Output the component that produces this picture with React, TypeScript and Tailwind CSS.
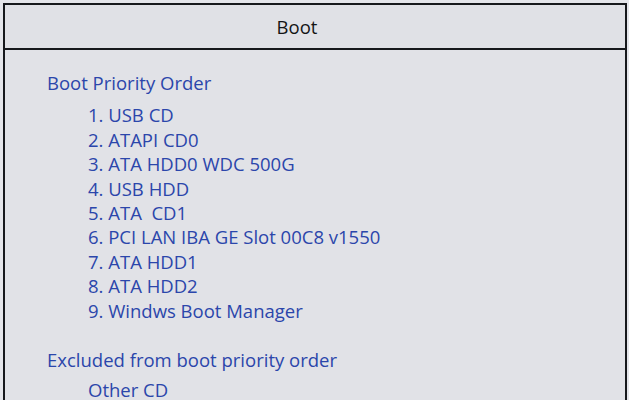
const bootOrder = [
  '1. USB CD',
  '2. ATAPI CD0',
  '3. ATA HDD0 WDC 500G',
  '4. USB HDD',
  '5. ATA\u00a0 CD1',
  '6. PCI LAN IBA GE Slot 00C8 v1550',
  '7. ATA HDD1',
  '8. ATA HDD2',
  '9. Windws Boot Manager',
];

export default function App() {
  return (
    <div
      className="h-[400px] w-[629px] overflow-hidden bg-[#e4e5ea] pl-[3px] pr-[2px] pt-[3px]"
      style={{ fontFamily: '"Open Sans", "Noto Sans", sans-serif' }}
    >
      <div className="h-[420px] border-2 border-[#16181c] bg-[#e1e2e7]">
        {/* Title bar */}
        <div className="flex h-[45px] items-center justify-center border-b-2 border-[#16181c] bg-[#e0e1e6] pr-[36px] text-[18.5px] text-[#141414]">
          Boot
        </div>

        {/* Body */}
        <div className="pl-[42px] pt-[21px] text-[18.5px] leading-[24.4px] text-[#2b46ab]">
          <div>Boot Priority Order</div>
          <div className="mt-[8px] pl-[41px]">
            {bootOrder.map((item) => (
              <div key={item}>{item}</div>
            ))}
          </div>

          <div className="mt-[25px]">Excluded from boot priority order</div>
          <div className="mt-[6px] pl-[41px]">Other CD</div>
        </div>
      </div>
    </div>
  );
}
